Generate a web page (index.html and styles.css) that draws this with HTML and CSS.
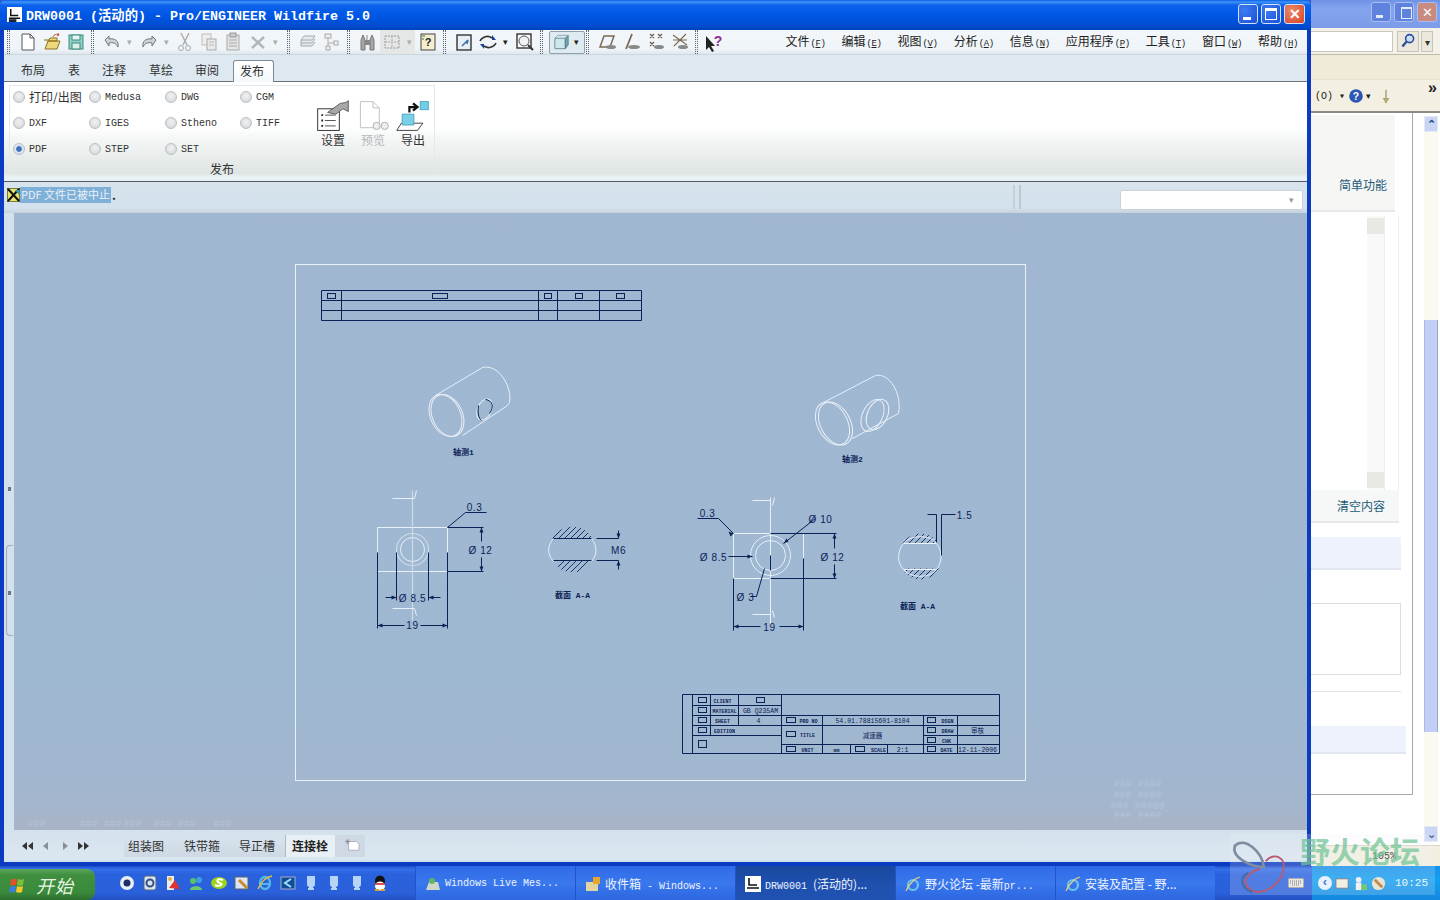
FILE: index.html
```html
<!DOCTYPE html>
<html lang="zh-CN">
<head>
<meta charset="utf-8">
<title>DRW0001 - Pro/ENGINEER Wildfire 5.0</title>
<link rel="stylesheet" href="styles.css">
</head>
<body>
<div class="desktop">
  <div class="screen">

    <!-- background browser window -->
    <section class="ie">
      <div class="ie-title">
        <span class="ie-ctl ie-min"></span><span class="ie-ctl ie-res"></span><span class="ie-ctl ie-cls">✕</span>
      </div>
      <div class="ie-addr">
        <span class="ie-input"></span>
        <span class="ie-search"><svg viewBox="0 0 20 20" width="16" height="16"><circle cx="12" cy="7" r="5" fill="#cfe0f5" stroke="#2a4f9a" stroke-width="2"/><path d="M8 11L3 17" stroke="#2a4f9a" stroke-width="3"/></svg></span>
        <span class="ie-drop">▾</span>
      </div>
      <div class="ie-menu"></div>
      <div class="ie-tools">
        <span class="ie-o">(O) ▾</span>
        <svg viewBox="0 0 20 20" width="16" height="16"><circle cx="10" cy="10" r="8.5" fill="#2d55b5"/><text x="10" y="15" class="ie-q">?</text></svg>
        <span class="ie-caret">▾</span>
        <svg viewBox="0 0 20 20" width="14" height="18"><path d="M10 1v12M7 14h6l-3 5z" stroke="#a9a070" stroke-width="2" fill="#e3d76a"/></svg>
        <span class="ie-more">»</span>
      </div>
      <div class="ie-content">
        <div class="ie-main">
          <div class="p-head"><span class="p-link">简单功能</span></div>
          <div class="p-editor"><div class="p-scroll"><i></i><i></i></div></div>
          <div class="p-foot"><span class="p-link">清空内容</span></div>
          <div class="band-a"></div>
          <div class="p-box"></div>
          <div class="line-row"></div>
          <div class="band-b"></div>
        </div>
        <div class="ie-scroll">
          <span class="sb-btn">⌃</span>
          <span class="sb-track"></span>
          <span class="sb-thumb"></span>
          <span class="sb-track2"></span>
          <span class="sb-btn">⌄</span>
        </div>
      </div>
      <div class="ie-status"><span class="ie-zoom">105%</span></div>
    </section>

    <!-- Pro/ENGINEER window -->
    <section class="proe">
      <header class="titlebar">
        <svg class="app-ico" viewBox="0 0 16 16" width="15" height="15"><rect width="16" height="16" fill="#fff"/><path d="M4 2v7h8M2 12h12" stroke="#111" stroke-width="1.6" fill="none"/><path d="M2 13h8v3H2z" fill="#223"/></svg>
        <span class="title-text">DRW0001 (活动的) - Pro/ENGINEER Wildfire 5.0</span>
        <span class="win-btns">
          <span class="win-btn"><i class="g-min"></i></span>
          <span class="win-btn"><i class="g-max"></i></span>
          <span class="win-btn win-close">✕</span>
        </span>
      </header>
      <div class="body">
        <div class="toolbar">
          <span class="sep first"></span>
          <span class="tb"><svg viewBox="0 0 20 20"><path d="M4 2h8l4 4v12H4z" fill="#fff" stroke="#555"/><path d="M12 2v4h4" fill="none" stroke="#555"/></svg></span>
          <span class="tb"><svg viewBox="0 0 20 20"><path d="M2 8h5l1-2h7v3H6L3 17h12l3-8H6" fill="#efd87a" stroke="#8a7020"/><path d="M11 5c1-3 4-3 6-2l-1-2M17 3l-2 1" stroke="#c04a20" fill="none"/></svg></span>
          <span class="tb"><svg viewBox="0 0 20 20"><rect x="3" y="3" width="14" height="14" fill="#8fd0c4" stroke="#3a8a80"/><rect x="6" y="3" width="8" height="5" fill="#e9f5f2" stroke="#3a8a80"/><rect x="6" y="11" width="8" height="6" fill="#dcefeb" stroke="#3a8a80"/></svg></span>
          <span class="sep"></span>
          <span class="tb"><svg viewBox="0 0 20 20"><path d="M3 8l4-4v3c6-1 10 2 9 8-2-4-5-5-9-4v3z" fill="#cfd3d8" stroke="#777"/></svg></span>
          <span class="tb-a mr2">▾</span>
          <span class="tb"><svg viewBox="0 0 20 20"><path d="M17 8l-4-4v3C7 6 3 9 4 15c2-4 5-5 9-4v3z" fill="#cfd3d8" stroke="#777"/></svg></span>
          <span class="tb-a mr1">▾</span>
          <span class="tb"><svg viewBox="0 0 20 20"><path d="M6 1l6 12M14 1L8 13" stroke="#aaa" stroke-width="1.4"/><circle cx="6" cy="16" r="2.5" fill="none" stroke="#aaa"/><circle cx="13" cy="16" r="2.5" fill="none" stroke="#aaa"/></svg></span>
          <span class="tb"><svg viewBox="0 0 20 20"><rect x="3" y="2" width="9" height="11" fill="#eee" stroke="#bbb"/><rect x="8" y="7" width="9" height="11" fill="#e9e9e9" stroke="#aaa"/><path d="M10 10h5M10 13h5" stroke="#bbb"/></svg></span>
          <span class="tb mr1"><svg viewBox="0 0 20 20"><rect x="4" y="3" width="12" height="15" fill="#e3e3e3" stroke="#aaa"/><rect x="7" y="1" width="6" height="4" fill="#ccc" stroke="#999"/><path d="M6 8h8M6 11h8M6 14h8" stroke="#aaa"/></svg></span>
          <span class="tb"><svg viewBox="0 0 20 20"><path d="M4 5l12 11M16 5L4 16" stroke="#b2b5b8" stroke-width="2.4"/></svg></span>
          <span class="tb-a mr3">▾</span>
          <span class="sep"></span>
          <span class="tb"><svg viewBox="0 0 20 20"><path d="M3 8l3-4h11l-3 4zM3 8v3l11 0 3-4M3 11v3h11l3-4" fill="#e6eaee" stroke="#a5a9ae"/></svg></span>
          <span class="tb"><svg viewBox="0 0 20 20"><path d="M6 6v11M6 11h7" stroke="#aaa" fill="none"/><rect x="3" y="2" width="6" height="4" fill="#eee" stroke="#aaa"/><rect x="12" y="9" width="4" height="4" fill="#eee" stroke="#aaa"/><rect x="4" y="14" width="4" height="4" fill="#eee" stroke="#aaa"/></svg></span>
          <span class="sep tight"></span>
          <span class="tb ml1"><svg viewBox="0 0 20 20"><path d="M3 18V8l2-5 2 5v10zM12 18V8l2-5 2 5v10z" fill="#a6a6a6" stroke="#777"/><rect x="7" y="8" width="5" height="5" fill="#888"/><path d="M9 3v5" stroke="#888"/></svg></span>
          <span class="tb tb-off"><svg viewBox="0 0 20 20"><rect x="3" y="4" width="14" height="12" fill="none" stroke="#999" stroke-dasharray="2 1"/><path d="M3 10h14M10 4v12" stroke="#aaa" stroke-dasharray="2 1"/></svg></span>
          <span class="tb-a tb-off mr1">▾</span>
          <span class="tb"><svg viewBox="0 0 20 20"><rect x="3" y="2" width="14" height="16" fill="#f6efcf" stroke="#444"/><text x="10" y="14" class="ico-q">?</text><path d="M4 4h3M4 7h2" stroke="#2a7a40"/></svg></span>
          <span class="sep"></span>
          <span class="tb"><svg viewBox="0 0 20 20"><rect x="3" y="3" width="14" height="15" fill="#e7eef6" stroke="#333" stroke-width="1.4"/><path d="M8 14l6-6M14 8l-1 4" stroke="#3a6fa8" stroke-width="1.5"/></svg></span>
          <span class="tb"><svg viewBox="0 0 20 20"><path d="M2 9a8 8 0 0 1 12-3M18 11a8 8 0 0 1-12 3" fill="none" stroke="#333" stroke-width="1.6"/><path d="M14 3v5h4zM6 17v-5H2z" fill="#1b3f9a"/></svg></span>
          <span class="tb-a dark mr2">▾</span>
          <span class="tb"><svg viewBox="0 0 20 20"><rect x="2" y="2" width="14" height="14" fill="#fff" stroke="#333" stroke-width="1.4"/><circle cx="9" cy="9" r="5" fill="#eef3f8" stroke="#555"/><path d="M13 13l5 5" stroke="#333" stroke-width="2"/></svg></span>
          <span class="sep tight"></span>
          <span class="tb-active ml1">
            <svg viewBox="0 0 20 20"><path d="M3 6h11v11H3z" fill="#cfe7ec" stroke="#6b8b92"/><path d="M14 6l3-3v10l-3 4z" fill="#6ea7b4" stroke="#5b7f88"/><path d="M3 6l3-3h11" fill="none" stroke="#8da6ad"/></svg>
            <span class="tb-a dark">▾</span>
          </span>
          <span class="sep ml1"></span>
          <span class="tb ml1"><svg viewBox="0 0 20 20"><path d="M2 15L6 4h10l-4 11z" fill="none" stroke="#7a6a52" stroke-width="1.5"/><ellipse cx="13" cy="15" rx="5" ry="2" fill="#888"/></svg></span>
          <span class="tb"><svg viewBox="0 0 20 20"><path d="M4 17L10 2" stroke="#7a6a52" stroke-width="1.8"/><ellipse cx="12" cy="15" rx="6" ry="2" fill="#888"/></svg></span>
          <span class="tb"><svg viewBox="0 0 20 20"><path d="M4 2l4 4M8 2L4 6M12 2l4 4M16 2l-4 4M4 10l4 4M8 10l-4 4" stroke="#6a5a48" stroke-width="1.2"/><ellipse cx="13" cy="15" rx="5" ry="2" fill="#888"/></svg></span>
          <span class="tb"><svg viewBox="0 0 20 20"><path d="M3 3l14 10M16 2L4 14M3 8h14" stroke="#7a6a52" stroke-width="1.1"/><ellipse cx="13" cy="15" rx="5" ry="2" fill="#888"/></svg></span>
          <span class="sep tight"></span>
          <span class="tb"><svg viewBox="0 0 20 20"><path d="M1 4v14l3-3 3 5 2-1-3-5h4z" fill="#222"/><text x="13" y="14" class="ico-help">?</text></svg></span>
          <nav class="menu">
            <span>文件<em>(<u>F</u>)</em></span>
            <span>编辑<em>(<u>E</u>)</em></span>
            <span>视图<em>(<u>V</u>)</em></span>
            <span>分析<em>(<u>A</u>)</em></span>
            <span>信息<em>(<u>N</u>)</em></span>
            <span>应用程序<em>(<u>P</u>)</em></span>
            <span>工具<em>(<u>T</u>)</em></span>
            <span>窗口<em>(<u>W</u>)</em></span>
            <span>帮助<em>(<u>H</u>)</em></span>
          </nav>
        </div>

        <div class="tabs">
          <span class="tab">布局</span>
          <span class="tab">表</span>
          <span class="tab">注释</span>
          <span class="tab">草绘</span>
          <span class="tab">审阅</span>
          <span class="tab active">发布</span>
        </div>

        <div class="ribbon">
          <div class="group">
            <div class="group-main">
              <div class="radios">
                <label class="r"><i></i><span class="zh">打印/出图</span></label>
                <label class="r"><i></i>Medusa</label>
                <label class="r"><i></i>DWG</label>
                <label class="r"><i></i>CGM</label>
                <label class="r"><i></i>DXF</label>
                <label class="r"><i></i>IGES</label>
                <label class="r"><i></i>Stheno</label>
                <label class="r"><i></i>TIFF</label>
                <label class="r on"><i></i>PDF</label>
                <label class="r"><i></i>STEP</label>
                <label class="r"><i></i>SET</label>
              </div>
              <div class="big-btns">
                <div class="big">
                  <svg viewBox="0 0 40 36" width="36" height="34"><rect x="3" y="10" width="24" height="24" fill="#fff" stroke="#222"/><path d="M7 17h2M7 23h2M7 29h2" stroke="#222" stroke-width="2"/><path d="M11 17h12M11 23h12M11 29h12" stroke="#444"/><path d="M14 14L28 4l6-1 3-2v12l-6-3-8 6z" fill="#a8a8a8" stroke="#555"/></svg>
                  <span>设置</span>
                </div>
                <div class="big off">
                  <svg viewBox="0 0 40 36" width="36" height="34"><path d="M6 2h14l7 7v22H6z" fill="#fff" stroke="#bbb"/><path d="M20 2v7h7" fill="none" stroke="#bbb"/><circle cx="24" cy="29" r="4" fill="#eee" stroke="#aaa"/><circle cx="33" cy="29" r="4" fill="#eee" stroke="#aaa"/></svg>
                  <span>预览</span>
                </div>
                <div class="big">
                  <svg viewBox="0 0 40 36" width="36" height="34"><path d="M16 14V8h7M20 4l5 4-5 4" fill="none" stroke="#111" stroke-width="2.5"/><rect x="28" y="2" width="9" height="9" fill="#6fd0e4" stroke="#4aa0c0"/><path d="M2 34l5-8h24l-6 8z" fill="#fff" stroke="#333"/><path d="M8 16h13v12H8z" fill="#78cfe6" stroke="#4c9fc0"/></svg>
                  <span>导出</span>
                </div>
              </div>
            </div>
            <div class="group-label">发布</div>
          </div>
        </div>

        <div class="msg">
          <svg class="msg-ico" viewBox="0 0 13 14" width="13" height="14"><rect width="13" height="14" fill="#e8e36a" stroke="#111"/><path d="M1 1l11 12M1 13L12 1" stroke="#111" stroke-width="2"/><path d="M8 2h4v5z" fill="#2aa0c8"/></svg>
          <span class="msg-sel">PDF 文件已被中止</span><span class="msg-dot">.</span>
          <span class="msg-split"></span>
          <span class="combo"><b>▾</b></span>
        </div>

        <div class="work">
          <aside class="rail"><span class="rail-handle"></span></aside>
          <svg class="sheet" viewBox="14 213 1293 617" width="1293" height="617">
            <defs>
              <clipPath id="sec1"><circle cx="572" cy="549" r="23"/></clipPath>
              <clipPath id="sec2"><ellipse cx="920" cy="556" rx="22" ry="23"/></clipPath>
            </defs>
            <g transform="translate(.5 .5)">
            <rect class="w" x="295" y="264" width="730" height="516"/>

            <g class="d">
              <path d="M321 290H641M321 300H641M321 310H641M321 320H641M321 290V320M341 290V320M538 290V320M557 290V320M599 290V320M641 290V320"/>
              <rect x="327" y="293" width="8" height="5"/><rect x="432" y="293" width="15" height="5"/><rect x="544" y="293" width="7" height="5"/><rect x="575" y="293" width="7" height="5"/><rect x="616" y="293" width="8" height="5"/>
            </g>

            <g class="w">
              <ellipse cx="445" cy="415" rx="15" ry="22" transform="rotate(-25 445 415)"/>
              <ellipse cx="447" cy="415" rx="15" ry="22" transform="rotate(-25 447 415)"/>
              <path d="M435 395L482 367C497 363 512 385 509 402L507 405L462 435"/>
              <ellipse cx="484" cy="409" rx="7" ry="11" transform="rotate(25 484 409)"/>
            </g>
            <path class="d" d="M478 405C477 412 478 418 481 420M485 399C492 400 494 406 489 413"/>
            <text class="cap" x="463" y="454">轴测1</text>

            <g class="w">
              <ellipse cx="832" cy="423" rx="15" ry="23" transform="rotate(-28 832 423)"/>
              <ellipse cx="835" cy="423" rx="15" ry="23" transform="rotate(-28 835 423)"/>
              <path d="M823 402L875 375C888 372 902 392 898 413L852 438"/>
              <ellipse cx="872" cy="415" rx="10" ry="17" transform="rotate(25 872 415)"/>
              <ellipse cx="877" cy="414" rx="10" ry="16" transform="rotate(25 877 414)"/>
            </g>
            <text class="cap" x="852" y="461">轴测2</text>

            <!-- front view 1 -->
            <g class="w">
              <path d="M377 527H447M377 571H447M377 527V552M447 527V552"/>
              <circle cx="412" cy="549" r="12"/>
              <path class="f" d="M412 490V620"/>
              <path d="M392 498H414M416 490L414 498M392 608H414M416 615L414 608"/>
            </g>
            <circle class="f" cx="412" cy="549" r="16"/>
            <g class="d">
              <path d="M377 552V628M447 552V628M377 625H404M420 625H447M447 527H483M447 571H483M481 527V541M481 557V571M447 527L465 512H486M396 552V600M428 552V600M385 597H396M428 597H440"/>
              <path class="tk" d="M396 597l-5-2v4zM428 597l5-2v4zM377 625l5-2v4zM447 625l-5-2v4zM481 527l-2 5h4zM481 571l-2-5h4z"/>
            </g>
            <text class="t" x="474" y="510">0.3</text>
            <text class="t" x="480" y="553">Ø 12</text>
            <text class="t" x="412" y="601">Ø 8.5</text>
            <text class="t" x="412" y="628">19</text>

            <!-- section 1 -->
            <g class="h" clip-path="url(#sec1)">
              <path d="M552 538l12-12M558 538l12-12M564 538l12-12M570 538l12-12M576 538l12-12M582 538l12-12M588 538l6-6M552 572l12-12M558 572l12-12M564 572l12-12M570 572l12-12M576 572l12-12M582 572l12-12M588 572l6-6"/>
            </g>
            <path class="w" d="M553 538C546 546 547 554 553 561M591 538C597 546 597 554 591 561"/>
            <g class="d">
              <path d="M553 538H591M553 560H591M596 538H618M596 560H618M618 530V538M618 560V569"/>
              <path class="tk" d="M618 538l-2-5h4zM618 560l-2 5h4z"/>
            </g>
            <text class="t" x="618" y="553">M6</text>
            <text class="cap" x="572" y="597">截面 A-A</text>

            <!-- front view 2 -->
            <g class="w">
              <path d="M733 533H770M733 578H770M733 533V578M803 533V558M770 497V625"/>
              <circle cx="770" cy="555" r="20"/>
              <circle cx="770" cy="555" r="15"/>
              <path d="M752 500H770M774 497L772 505M752 614H770M774 617L772 610"/>
            </g>
            <g class="d">
              <path d="M770 533H836M770 578H836M733 578V630M803 558V630M733 626H760M779 626H803M834 533V548M834 564V578"/>
              <path d="M697 518H718L733 533M815 518L783 543M728 556H752M750 596H756L764 568"/>
              <path d="M770 555V570" />
              <path class="tk" d="M733 626l5-2v4zM803 626l-5-2v4zM834 533l-2 5h4zM834 578l-2-5h4zM752 556l-5-2v4zM733 533l-5-2 2 5zM783 543l5-2-2-3z"/>
            </g>
            <text class="t" x="707" y="516">0.3</text>
            <text class="t" x="820" y="522">Ø 10</text>
            <text class="t" x="713" y="560">Ø 8.5</text>
            <text class="t" x="745" y="600">Ø 3</text>
            <text class="t" x="832" y="560">Ø 12</text>
            <text class="t" x="769" y="630">19</text>

            <!-- section 2 -->
            <g class="h" clip-path="url(#sec2)">
              <path d="M896 543l12-12M902 543l12-12M908 543l12-12M914 543l12-12M920 543l12-12M926 543l12-12M932 543l12-12M896 580l12-12M902 580l12-12M908 580l12-12M914 580l12-12M920 580l12-12M926 580l12-12M932 580l12-12"/>
            </g>
            <path class="w" d="M903 543C908 535 930 533 936 543C942 550 942 562 936 569C930 578 910 578 903 569C896 562 897 550 903 543Z"/>
            <path class="w2" d="M903 543H936M903 569H936"/>
            <path class="d" d="M927 514H936V542M941 555V514H955"/>
            <text class="t" x="964" y="518">1.5</text>
            <text class="cap" x="917" y="608">截面 A-A</text>

            <!-- title block -->
            <g class="d">
              <path d="M682 694H999V753H682ZM692 694V753M692 705H781M692 715H999M692 725H999M692 735H781M710 694V735M738 694V725M781 694V753M781 744H999M923 735H999M822 715V753M923 715V753M957 715V753M850 744V753M887 744V753"/>
              <rect x="698" y="697" width="8" height="5"/><rect x="756" y="697" width="8" height="5"/><rect x="698" y="707" width="8" height="5"/><rect x="698" y="717" width="8" height="5"/><rect x="698" y="727" width="8" height="5"/><rect x="698" y="740" width="8" height="7"/>
              <rect x="786" y="717" width="9" height="5"/><rect x="786" y="731" width="9" height="5"/><rect x="786" y="746" width="9" height="5"/><rect x="855" y="746" width="9" height="5"/>
              <rect x="927" y="717" width="8" height="5"/><rect x="927" y="727" width="8" height="5"/><rect x="927" y="737" width="8" height="5"/><rect x="927" y="746" width="8" height="5"/>
            </g>
            <text class="s" x="722" y="702">CLIENT</text>
            <text class="s" x="724" y="712">MATERIAL</text>
            <text class="s" x="722" y="722">SHEET</text>
            <text class="s" x="724" y="732">EDITION</text>
            <text class="s2" x="760" y="712">GB Q235AM</text>
            <text class="s2" x="758" y="722">4</text>
            <text class="s" x="808" y="722">PRD NO</text>
            <text class="s2" x="872" y="722">54.01.78815601-8104</text>
            <text class="s" x="807" y="736">TITLE</text>
            <text class="s2" x="872" y="737">减速器</text>
            <text class="s" x="807" y="751">UNIT</text>
            <text class="s" x="836" y="751">mm</text>
            <text class="s" x="878" y="751">SCALE</text>
            <text class="s2" x="902" y="751">2:1</text>
            <text class="s" x="947" y="722">DSGN</text>
            <text class="s" x="947" y="732">DRAW</text>
            <text class="s2" x="977" y="732">审核</text>
            <text class="s" x="946" y="742">CHK</text>
            <text class="s" x="946" y="751">DATE</text>
            <text class="s2" x="977" y="751">12-11-2006</text>

            <g class="ghost">
              <text x="36" y="826">###</text><text x="100" y="826">### ###</text><text x="132" y="826">###</text><text x="174" y="826">### ###</text><text x="222" y="826">###</text>
              <text x="1137" y="786">### ####</text><text x="1137" y="797">### ####</text><text x="1137" y="808">### ###00</text><text x="1137" y="817">### ####</text>
            </g>
            </g>
          </svg>
        </div>

        <div class="sheetbar">
          <div class="sheet-nav">
            <svg viewBox="0 0 12 8" width="12" height="8"><path d="M6 0v8L1 4zM12 0v8L7 4z" fill="#333"/></svg>
            <svg viewBox="0 0 12 8" width="12" height="8"><path d="M8 0v8L3 4z" fill="#8a8f96"/></svg>
            <svg viewBox="0 0 12 8" width="12" height="8"><path d="M4 0v8l5-4z" fill="#8a8f96"/></svg>
            <svg viewBox="0 0 12 8" width="12" height="8"><path d="M0 0v8l5-4zM6 0v8l5-4z" fill="#333"/></svg>
          </div>
          <div class="sheet-tabs">
            <span class="s-tab">组装图</span>
            <span class="s-tab">铁带箍</span>
            <span class="s-tab">导正槽</span>
            <span class="s-tab cur">连接栓</span>
            <span class="s-new"><svg viewBox="0 0 20 16" width="18" height="14"><path d="M6 4h9l3 3v7H6z" fill="#fff" stroke="#aab"/><path d="M5 1v6M2 4h6M3 2l4 4M7 2L3 6" stroke="#889" stroke-width=".8"/></svg></span>
          </div>
        </div>
      </div>
    </section>
  </div>

  <!-- taskbar -->
  <footer class="taskbar">
    <button class="start">
      <svg viewBox="0 0 20 20" width="20" height="20"><path d="M3 5c3-2 4 0 6-1l-1 6c-2 1-3-1-6 1z" fill="#e8502a"/><path d="M10 4c2 1 4 1 6 0l-1 6c-2 1-4 1-6 0z" fill="#7fbf3a"/><path d="M2 12c3-2 4 0 6-1l-1 6c-2 1-3-1-6 1z" fill="#3a7fdf"/><path d="M9 11c2 1 4 1 6 0l-1 6c-2 1-4 1-6 0z" fill="#f5c92a"/></svg>
      <span>开始</span>
    </button>
    <div class="quick">
      <svg viewBox="0 0 16 16"><circle cx="8" cy="8" r="7" fill="#e9eef8"/><circle cx="8" cy="8" r="3.5" fill="#1c2f66"/></svg>
      <svg viewBox="0 0 16 16"><rect x="2" y="1" width="12" height="14" rx="2" fill="#d9e4f5" stroke="#567"/><circle cx="8" cy="8" r="3.5" fill="none" stroke="#36507f" stroke-width="2"/></svg>
      <svg viewBox="0 0 16 16"><path d="M2 1h7v14H2z" fill="#eee"/><path d="M4 13L10 5l5 9z" fill="#d33"/><circle cx="5" cy="4" r="2" fill="#e6b23a"/></svg>
      <svg viewBox="0 0 16 16"><circle cx="5" cy="6" r="3" fill="#58c26a"/><circle cx="11" cy="5" r="3" fill="#3f9fdc"/><path d="M2 15c0-5 12-5 12 0z" fill="#6cc870"/></svg>
      <svg viewBox="0 0 16 16"><ellipse cx="8" cy="8" rx="8" ry="6" fill="#9fd21c"/><path d="M12 5c-4-2-7 0-5 2s5 1 3 3c-1 1-4 1-6 0" fill="none" stroke="#fff" stroke-width="2"/></svg>
      <svg viewBox="0 0 16 16"><rect x="1" y="2" width="13" height="12" fill="#dce6f5" stroke="#567"/><path d="M5 5l8 8" stroke="#c88a2a" stroke-width="3"/></svg>
      <svg viewBox="0 0 16 16"><ellipse cx="8" cy="8" rx="5" ry="6" fill="none" stroke="#53b6ea" stroke-width="2.4"/><path d="M3 9h10" stroke="#53b6ea" stroke-width="2"/><path d="M1 14C4 7 9 2 15 1" fill="none" stroke="#e7c23a" stroke-width="1.4"/></svg>
      <svg viewBox="0 0 16 16"><rect x="1" y="2" width="14" height="12" fill="#0e4f96" stroke="#aac"/><path d="M11 4L5 8l6 4" fill="none" stroke="#9fe0ff" stroke-width="2"/></svg>
      <svg viewBox="0 0 16 16"><path d="M4 1h8v8c0 2-1 3-2 3v1h1v2H5v-2h1v-1c-1 0-2-1-2-3z" fill="#b6d4f5"/></svg>
      <svg viewBox="0 0 16 16"><path d="M4 1h8v8c0 2-1 3-2 3v1h1v2H5v-2h1v-1c-1 0-2-1-2-3z" fill="#b6d4f5"/></svg>
      <svg viewBox="0 0 16 16"><path d="M4 1h8v8c0 2-1 3-2 3v1h1v2H5v-2h1v-1c-1 0-2-1-2-3z" fill="#b6d4f5"/></svg>
      <svg viewBox="0 0 16 16"><ellipse cx="8" cy="6" rx="5" ry="5.5" fill="#111"/><ellipse cx="8" cy="11" rx="5" ry="4.5" fill="#fff"/><path d="M3 15h4M9 15h4" stroke="#e8a020" stroke-width="2"/><path d="M3 9h10" stroke="#d22" stroke-width="1.6"/></svg>
    </div>
    <div class="tasks">
      <span class="task"><svg viewBox="0 0 16 16"><path d="M1 14l3-8h9l2 8z" fill="#cfd8c8"/><circle cx="7" cy="5" r="3" fill="#5fb85f"/></svg><span>Windows Live Mes...</span></span>
      <span class="task"><svg viewBox="0 0 16 16"><rect x="1" y="6" width="12" height="9" fill="#e2d6a0"/><rect x="8" y="1" width="7" height="7" fill="#e8a72a"/></svg><span><span class="cj">收件箱</span> - Windows...</span></span>
      <span class="task cur"><svg viewBox="0 0 16 16"><rect width="16" height="16" fill="#fff"/><path d="M4 2v7h8M2 12h12" stroke="#111" stroke-width="1.6" fill="none"/></svg><span>DRW0001 <span class="cj">(活动的)...</span></span></span>
      <span class="task"><svg viewBox="0 0 16 16"><ellipse cx="8" cy="9" rx="5" ry="5" fill="none" stroke="#6cc4f0" stroke-width="2.2"/><path d="M1 15C4 8 10 2 15 1" fill="none" stroke="#e8d27a" stroke-width="1.2"/></svg><span><span class="cj">野火论坛 -最新</span>pr...</span></span>
      <span class="task"><svg viewBox="0 0 16 16"><ellipse cx="8" cy="9" rx="5" ry="5" fill="none" stroke="#6cc4f0" stroke-width="2.2"/><path d="M1 15C4 8 10 2 15 1" fill="none" stroke="#e8d27a" stroke-width="1.2"/></svg><span><span class="cj">安装及配置 - 野...</span></span></span>
    </div>
    <div class="tray">
      <svg class="kbd" viewBox="0 0 16 10" width="16" height="10"><rect width="16" height="10" fill="#e8e8e8" stroke="#555"/><path d="M2 3h12M2 5h12M4 7h8" stroke="#555" stroke-dasharray="1 1"/></svg>
      <div class="tray-in">
        <span class="chev">‹</span>
        <svg viewBox="0 0 16 16" width="15" height="15"><rect x="1" y="3" width="13" height="10" fill="#f3f0dc" stroke="#667"/></svg>
        <svg viewBox="0 0 16 16" width="15" height="15"><circle cx="6" cy="4" r="3" fill="#f0f0f0"/><rect x="3" y="7" width="6" height="8" fill="#f0f0f0"/><rect x="9" y="9" width="6" height="6" fill="#56c04a"/></svg>
        <svg viewBox="0 0 16 16" width="15" height="15"><circle cx="8" cy="8" r="7" fill="#e9e2c8"/><path d="M4 4l8 8" stroke="#b0762a" stroke-width="3"/></svg>
        <span class="clock">10:25</span>
      </div>
    </div>
  </footer>

  <!-- forum watermark over the screenshot -->
  <div class="watermark">
    <svg class="wm-logo" viewBox="0 0 60 60" width="60" height="58"><path d="M4 8C14-2 32 14 34 30C20 30 0 20 4 8Z" fill="none" stroke="#7f8da0" stroke-width="2.8"/><path d="M36 24C44 14 58 20 54 34C50 50 30 62 18 52C10 44 20 34 30 32" fill="none" stroke="#b85a72" stroke-width="2"/><path d="M18 36C8 40 10 52 22 56" fill="none" stroke="#3f6fb0" stroke-width="2.4"/></svg>
    <span class="wm-text">野火论坛</span>
  </div>
</div>
</body>
</html>
```

FILE: styles.css
```css
* { box-sizing: border-box; }
html, body { margin: 0; padding: 0; width: 1440px; height: 900px; overflow: hidden; }
body { font-family: "Noto Sans CJK SC", "Liberation Sans", sans-serif; font-size: 12px; color: #222; }

.desktop { position: relative; width: 1440px; height: 900px; display: flex; flex-direction: column; background: #2a5fdc; overflow: hidden; }
.screen { position: relative; height: 866px; flex: none; }

/* ---------- background browser ---------- */
.ie { position: absolute; left: 1311px; top: 0; width: 129px; height: 866px; display: flex; flex-direction: column; background: #fff; }
.ie-title { height: 28px; flex: none; display: flex; justify-content: flex-end; align-items: center; gap: 3px; padding: 0 3px 4px 0; background: linear-gradient(#6f92e6, #84a4ee 30%, #7c9ce8 100%); }
.ie-ctl { width: 20px; height: 20px; border-radius: 3px; border: 1px solid #a9bdf0; background: #5f83dc; color: #fff; font-size: 13px; line-height: 18px; text-align: center; position: relative; }
.ie-cls { background: #c98a80; }
.ie-min::after { content: ""; position: absolute; left: 4px; bottom: 3px; width: 7px; height: 3px; background: #e4ebfb; }
.ie-res::after { content: ""; position: absolute; left: 6px; top: 4px; width: 9px; height: 9px; border: 1px solid #e4ebfb; border-top-width: 2px; }
.ie-addr { height: 27px; flex: none; display: flex; align-items: center; padding-right: 7px; background: #f4f2e8; border-bottom: 1px solid #bdbaa8; }
.ie-input { width: 83px; height: 21px; background: #fff; border: 1px solid #c8c8c0; border-left: 0; }
.ie-search { width: 22px; height: 21px; margin-left: 4px; border: 1px solid #c3c3bb; display: flex; align-items: center; justify-content: center; background: #ece9dc; }
.ie-drop { width: 12px; height: 21px; margin-left: 2px; border: 1px solid #c3c3bb; background: #ece9dc; color: #333; font-size: 10px; text-align: center; line-height: 19px; }
.ie-menu { height: 25px; flex: none; background: #efead9; border-bottom: 1px solid #e7e1cd; }
.ie-tools { height: 33px; flex: none; display: flex; align-items: center; gap: 2px; background: #f3efe3; border-bottom: 2px solid #8a8a84; position: relative; padding-left: 4px; }
.ie-o { font-family: "Liberation Mono", monospace; font-size: 10px; width: 31px; white-space: nowrap; }
.ie-q { font: bold 13px "Liberation Sans", sans-serif; fill: #fff; text-anchor: middle; }
.ie-caret { font-size: 9px; margin-right: 6px; }
.ie-more { position: absolute; right: 3px; top: 0; font: bold 16px "Liberation Sans", sans-serif; line-height: 16px; }
.ie-content { flex: 1; display: flex; min-height: 0; background: #fff; }
.ie-main { width: 102px; flex: none; height: 682px; padding-top: 2px; border-right: 1px solid #aaa; border-bottom: 1px solid #aaa; display: flex; flex-direction: column; }
.p-head { height: 97px; flex: none; margin-right: 17px; background: #f6f6f5; border-bottom: 2px solid #e9e9e9; display: flex; align-items: flex-end; justify-content: flex-end; padding: 0 8px 17px 0; }
.p-link { color: #1d5b78; font-size: 12px; line-height: 16px; }
.p-editor { height: 274px; flex: none; margin: 4px 13px 0 0; display: flex; justify-content: flex-end; border-right: 1px solid #eee; }
.p-scroll { width: 18px; height: 100%; margin-right: 13px; background: #f9f9f8; display: flex; flex-direction: column; justify-content: space-between; padding: 2px 0; border-right: 1px solid #eee; }
.p-scroll i { height: 16px; background: #e8e8e4; }
.p-foot { height: 33px; flex: none; margin-right: 13px; background: #f6f7f7; border-bottom: 2px solid #e7e7e7; display: flex; align-items: center; justify-content: flex-end; padding-right: 14px; }
.band-a { height: 33px; flex: none; margin: 14px 11px 0 0; background: #eef2fd; border-bottom: 2px solid #e2e6f0; }
.p-box { height: 72px; flex: none; margin: 33px 11px 0 0; border: 1px solid #ddd; border-left: 0; }
.line-row { height: 17px; flex: none; margin-right: 11px; border-bottom: 1px solid #e2e2e2; }
.band-b { height: 28px; flex: none; margin: 34px 6px 0 0; background: #eef2fd; border-bottom: 2px solid #e2e6f0; }
.ie-scroll { width: 14px; margin: 3px 0 0 11px; flex: none; display: flex; flex-direction: column; height: 726px; }
.sb-btn { height: 16px; flex: none; background: #c8d5f3; color: #2c4b8a; font: bold 11px "Liberation Sans", sans-serif; text-align: center; line-height: 14px; border: 1px solid #e5e9f5; }
.sb-track { height: 188px; flex: none; background: #fbfaf0; }
.sb-thumb { height: 412px; flex: none; background: #c2cef5; border-left: 1px solid #aab8e6; border-right: 1px solid #98a8da; }
.sb-track2 { flex: 1; background: #fbfaf0; }
.ie-status { height: 21px; flex: none; background: #f3efe0; border-top: 1px solid #d8d4c4; display: flex; align-items: center; justify-content: flex-end; padding-right: 44px; }
.ie-zoom { font: 10px "Liberation Mono", monospace; }

/* ---------- Pro/E window ---------- */
.proe { position: absolute; left: 0; top: 0; width: 1311px; height: 866px; display: flex; flex-direction: column; }
.titlebar { height: 30px; flex: none; display: flex; align-items: center; padding: 0 6px 2px 7px; border-radius: 6px 6px 0 0; background: linear-gradient(#0a5ee4 0, #3f93fb 2px, #0d63ec 5px, #0058e6 14px, #004fd6 24px, #0044be 30px); }
.app-ico { flex: none; }
.title-text { margin-left: 4px; color: #fff; font: bold 13.33px "Liberation Mono", "Noto Sans CJK SC", monospace; white-space: pre; }
.win-btns { margin-left: auto; display: flex; gap: 3px; }
.win-btn { width: 20px; height: 20px; border: 1px solid #d5e2fb; border-radius: 3px; background: radial-gradient(circle at 30% 30%, #3e7cf0, #1a50d8); position: relative; color: #fff; font: bold 14px/18px "Liberation Sans", sans-serif; text-align: center; }
.win-close { width: 21px; background: radial-gradient(circle at 35% 30%, #ee8a64, #d6432a); }
.g-min { position: absolute; left: 4px; bottom: 3px; width: 8px; height: 3px; background: #fff; }
.g-max { position: absolute; left: 3px; top: 3px; width: 12px; height: 12px; border: 1px solid #fff; border-top-width: 3px; }

.body { flex: 1; min-height: 0; display: flex; flex-direction: column; border: solid #0a3bc2; border-width: 0 4px 4px 4px; background: #d9e5ef; }

.toolbar { height: 25px; flex: none; display: flex; align-items: center; padding: 0 9px 0 3px; background: linear-gradient(#f3f7fa, #eff4f8 80%, #dfe8ee); border-bottom: 1px solid #cdd8de; }
.sep { width: 3px; height: 24px; flex: none; margin: 0 6px 0 3px; border-left: 1px dotted #5c6670; border-right: 1px dotted #5c6670; }
.sep.first { margin-left: 0; }
.sep.tight { margin-right: 5px; }
.mr1 { margin-right: 1px; }
.mr2 { margin-right: 2px; }
.mr3 { margin-right: 3px; }
.ml1 { margin-left: 1px; }
.tb { width: 24px; height: 24px; flex: none; display: flex; align-items: center; justify-content: center; }
.tb svg { width: 20px; height: 20px; }
.tb-a { width: 11px; flex: none; text-align: center; font-size: 9px; line-height: 24px; color: #aaa; }
.tb-a.dark { color: #222; }
.tb-off { background: #e5e6e6; }
.tb-active { width: 36px; height: 23px; flex: none; display: flex; align-items: center; justify-content: space-around; padding: 0 2px; background: #dfeaf1; border: 1px solid #8ea0ae; border-radius: 2px; }
.tb-active svg { width: 20px; height: 20px; }
.ico-q { font: bold 11px "Liberation Sans", sans-serif; text-anchor: middle; fill: #222; }
.ico-help { font: bold 14px "Liberation Sans", sans-serif; fill: #8a2e8e; text-anchor: middle; }

.menu { margin-left: auto; display: flex; gap: 16px; white-space: nowrap; font-size: 12px; line-height: 16px; color: #222; margin-top: 1px; }
.menu em { font-style: normal; font-family: "Liberation Mono", monospace; font-size: 9px; letter-spacing: -.4px; margin-left: 1px; }

.tabs { height: 27px; flex: none; display: flex; align-items: flex-end; padding-left: 17px; background: #dde8f1; border-bottom: 1px solid #6f7478; }
.tab { margin-right: 23px; height: 21px; line-height: 20px; font-size: 12px; color: #333; }
.tab:nth-child(even) { margin-right: 22px; }
.tab:nth-child(5) { margin-right: 14px; }
.tab.active { margin-right: 0; padding: 0 9px 0 6px; height: 22px; background: linear-gradient(#fff, #f3f8fb); border: 1px solid #7d8a96; border-bottom: 0; border-radius: 3px 3px 0 0; margin-bottom: -1px; }

.ribbon { height: 100px; flex: none; background: linear-gradient(#fff 0, #fff 45%, #f2f5f4 60%, #dfe5e2 92%, #e8f1f5 96%); border-bottom: 1px solid #535a60; padding: 3px 0 0 5px; }
.group { width: 426px; height: 92px; border: 1px solid #e4e9ec; border-bottom: 0; display: flex; flex-direction: column; }
.group-main { height: 79px; display: flex; }
.radios { width: 299px; padding-left: 3px; margin-top: -2px; display: grid; grid-template-columns: 76px 76px 75px 72px; grid-auto-rows: 26px; }
.r { display: flex; align-items: center; gap: 4px; font: 10px "Liberation Mono", monospace; color: #333; white-space: nowrap; }
.r .zh { font: 12px "Noto Sans CJK SC", sans-serif; margin: -2px -4px 0 0; }
.r i { width: 12px; height: 12px; flex: none; border-radius: 50%; border: 1px solid #b9bfc4; background: radial-gradient(circle at 50% 40%, #f2f2f2, #cfd3d6); }
.r.on i { background: radial-gradient(circle, #3f73bd 0, #3f73bd 35%, #dbe3ee 45%); }
.big-btns { display: flex; padding: 13px 0 0 4px; }
.big { width: 40px; display: flex; flex-direction: column; align-items: center; font-size: 12px; line-height: 14px; color: #333; }
.big.off { color: #b3b7ba; }
.group-label { text-align: center; font-size: 12px; line-height: 14px; color: #333; margin-top: -3px; }

.msg { height: 31px; flex: none; display: flex; align-items: flex-start; padding-top: 5px; background: linear-gradient(#d7e4ee, #d3e1ec 85%, #c5d2dc); position: relative; }
.msg-ico { margin-left: 3px; margin-top: 1px; flex: none; }
.msg-sel { height: 16px; line-height: 15px; background: #7fb0d8; color: #e8f2f9; font-size: 11px; white-space: nowrap; padding-left: 1px; width: 91px; overflow: hidden; }
.msg-dot { font-weight: bold; line-height: 15px; margin-left: 1px; }
.msg-split { position: absolute; left: 1009px; top: 3px; width: 8px; height: 24px; border-left: 2px solid #c3d0da; border-right: 2px solid #bcc9d3; }
.combo { position: absolute; left: 1116px; top: 8px; width: 183px; height: 20px; background: #fff; border: 1px solid #c9d2d9; border-radius: 2px; color: #999; font-size: 9px; text-align: right; padding-right: 8px; line-height: 17px; }
.combo b { font-weight: normal; }

.work { flex: 1; min-height: 0; display: flex; background: #a0b7d1; }
.rail { width: 10px; flex: none; background: #d3e1ec; position: relative; }
.rail::before, .rail::after { content: ""; position: absolute; left: 4px; width: 3px; height: 4px; background: #6d7884; }
.rail::before { top: 274px; }
.rail::after { top: 378px; }
.rail-handle { position: absolute; left: 2px; top: 332px; width: 7px; height: 91px; border: 1px solid #a3adb8; border-right: 0; border-radius: 4px 0 0 4px; }
.sheet { display: block; flex: none; background: linear-gradient(#a1b7d1 0, #9fb8d2 75%, #a3b6ce 96%, #a9b3c6 100%); }
.sheet .w, .sheet .w2, .sheet .d, .sheet .h, .sheet .f { fill: none; }
.sheet .w { stroke: #e8f0f8; stroke-width: 1; }
.sheet .w2 { stroke: #eef4fa; stroke-width: 1; }
.sheet .f { stroke: #cddbe8; stroke-width: 1.2; }
.sheet .d { stroke: #0b2257; stroke-width: 1; }
.sheet .h { stroke: #1a3468; stroke-width: 1; }
.sheet .tk { fill: #0b2257; stroke: none; }
.sheet text { font-family: "Liberation Mono", "Noto Sans CJK SC", monospace; fill: #0d2358; text-anchor: middle; }
.sheet .t { font-family: "Liberation Sans", sans-serif; font-size: 10px; letter-spacing: .6px; }
.sheet .cap { font-size: 8px; font-weight: bold; }
.sheet .s { font-size: 5px; font-weight: bold; }
.sheet .s2 { font-size: 6.5px; }
.sheet .ghost text { font-size: 10px; fill: #b4c4d8; }

.sheetbar { height: 32px; flex: none; display: flex; align-items: center; background: linear-gradient(#d4e2ed, #dbe6f0 90%, #c9e2ee); }
.sheet-nav { width: 120px; flex: none; display: flex; gap: 7px; padding-left: 17px; }
.sheet-tabs { display: flex; align-items: center; }
.s-tab { width: 55px; padding-left: 4px; height: 22px; line-height: 22px; font-size: 12px; color: #333; white-space: nowrap; background: linear-gradient(#d7e3ee, #ced9e4); }
.s-tab:first-child { width: 56px; }
.s-tab:nth-child(3) { width: 50px; }
.s-tab.cur { width: 50px; padding-left: 6px; font-weight: bold; color: #222; background: #e9f0f5; border-left: 1px solid #aeb8c2; }
.s-new { width: 30px; height: 22px; padding: 3px 0 0 8px; background: #ced9e4; }

/* ---------- taskbar ---------- */
.taskbar { height: 34px; flex: none; display: flex; align-items: stretch; background: linear-gradient(#1c4cc4 0, #3470ec 3px, #2a62de 8px, #2a60da 80%, #2150c0 100%); }
.start { width: 95px; flex: none; margin: 3px 0 0; padding: 0 0 0 8px; border: 0; border-radius: 0 8px 8px 0; background: linear-gradient(#5aa65a, #3f8f3f 20%, #3a8a3c 75%, #2c6f2e); display: flex; align-items: center; gap: 8px; }
.start span { color: #eaf5e6; font: italic 18px "Noto Sans CJK SC", sans-serif; letter-spacing: 1px; }
.quick { width: 320px; flex: none; display: flex; align-items: center; gap: 7px; padding-left: 24px; }
.quick svg { width: 16px; height: 16px; flex: none; }
.tasks { display: flex; width: 800px; flex: none; }
.task { width: 160px; display: flex; align-items: center; gap: 4px; padding: 1px 0 0 9px; color: #eef4ff; font: 10px "Liberation Mono", monospace; white-space: nowrap; overflow: hidden; border-left: 1px solid #2453c4; background: linear-gradient(#2f6ae6, #3a78ee 50%, #2c66e0); }
.task svg { width: 16px; height: 16px; flex: none; }
.task .cj { font: 12px "Noto Sans CJK SC", sans-serif; }
.task.cur { background: linear-gradient(#1a479e, #1f50ae 50%, #2052b2); }
.tray { flex: 1; display: flex; align-items: center; padding-left: 73px; }
.kbd { flex: none; }
.tray-in { margin-left: 8px; flex: 1; height: 100%; display: flex; align-items: center; gap: 3px; padding-left: 6px; background: linear-gradient(#1690ea, #12a0f0 40%, #1288de); }
.chev { width: 14px; height: 14px; border-radius: 50%; background: #e6f2ff; color: #1c5dc0; font: bold 13px/12px "Liberation Sans", sans-serif; text-align: center; }
.clock { margin-left: 6px; color: #eaf6ff; font: 11px "Liberation Mono", monospace; }

.watermark { position: absolute; left: 1230px; top: 834px; width: 205px; height: 61px; background: rgba(240, 240, 250, .2); display: flex; }
.wm-logo { position: absolute; left: 0; top: 4px; }
.wm-text { position: absolute; left: 70px; top: -5px; font-size: 30px; font-weight: bold; line-height: 42px; color: rgba(112, 196, 150, .72); white-space: nowrap; }
```
